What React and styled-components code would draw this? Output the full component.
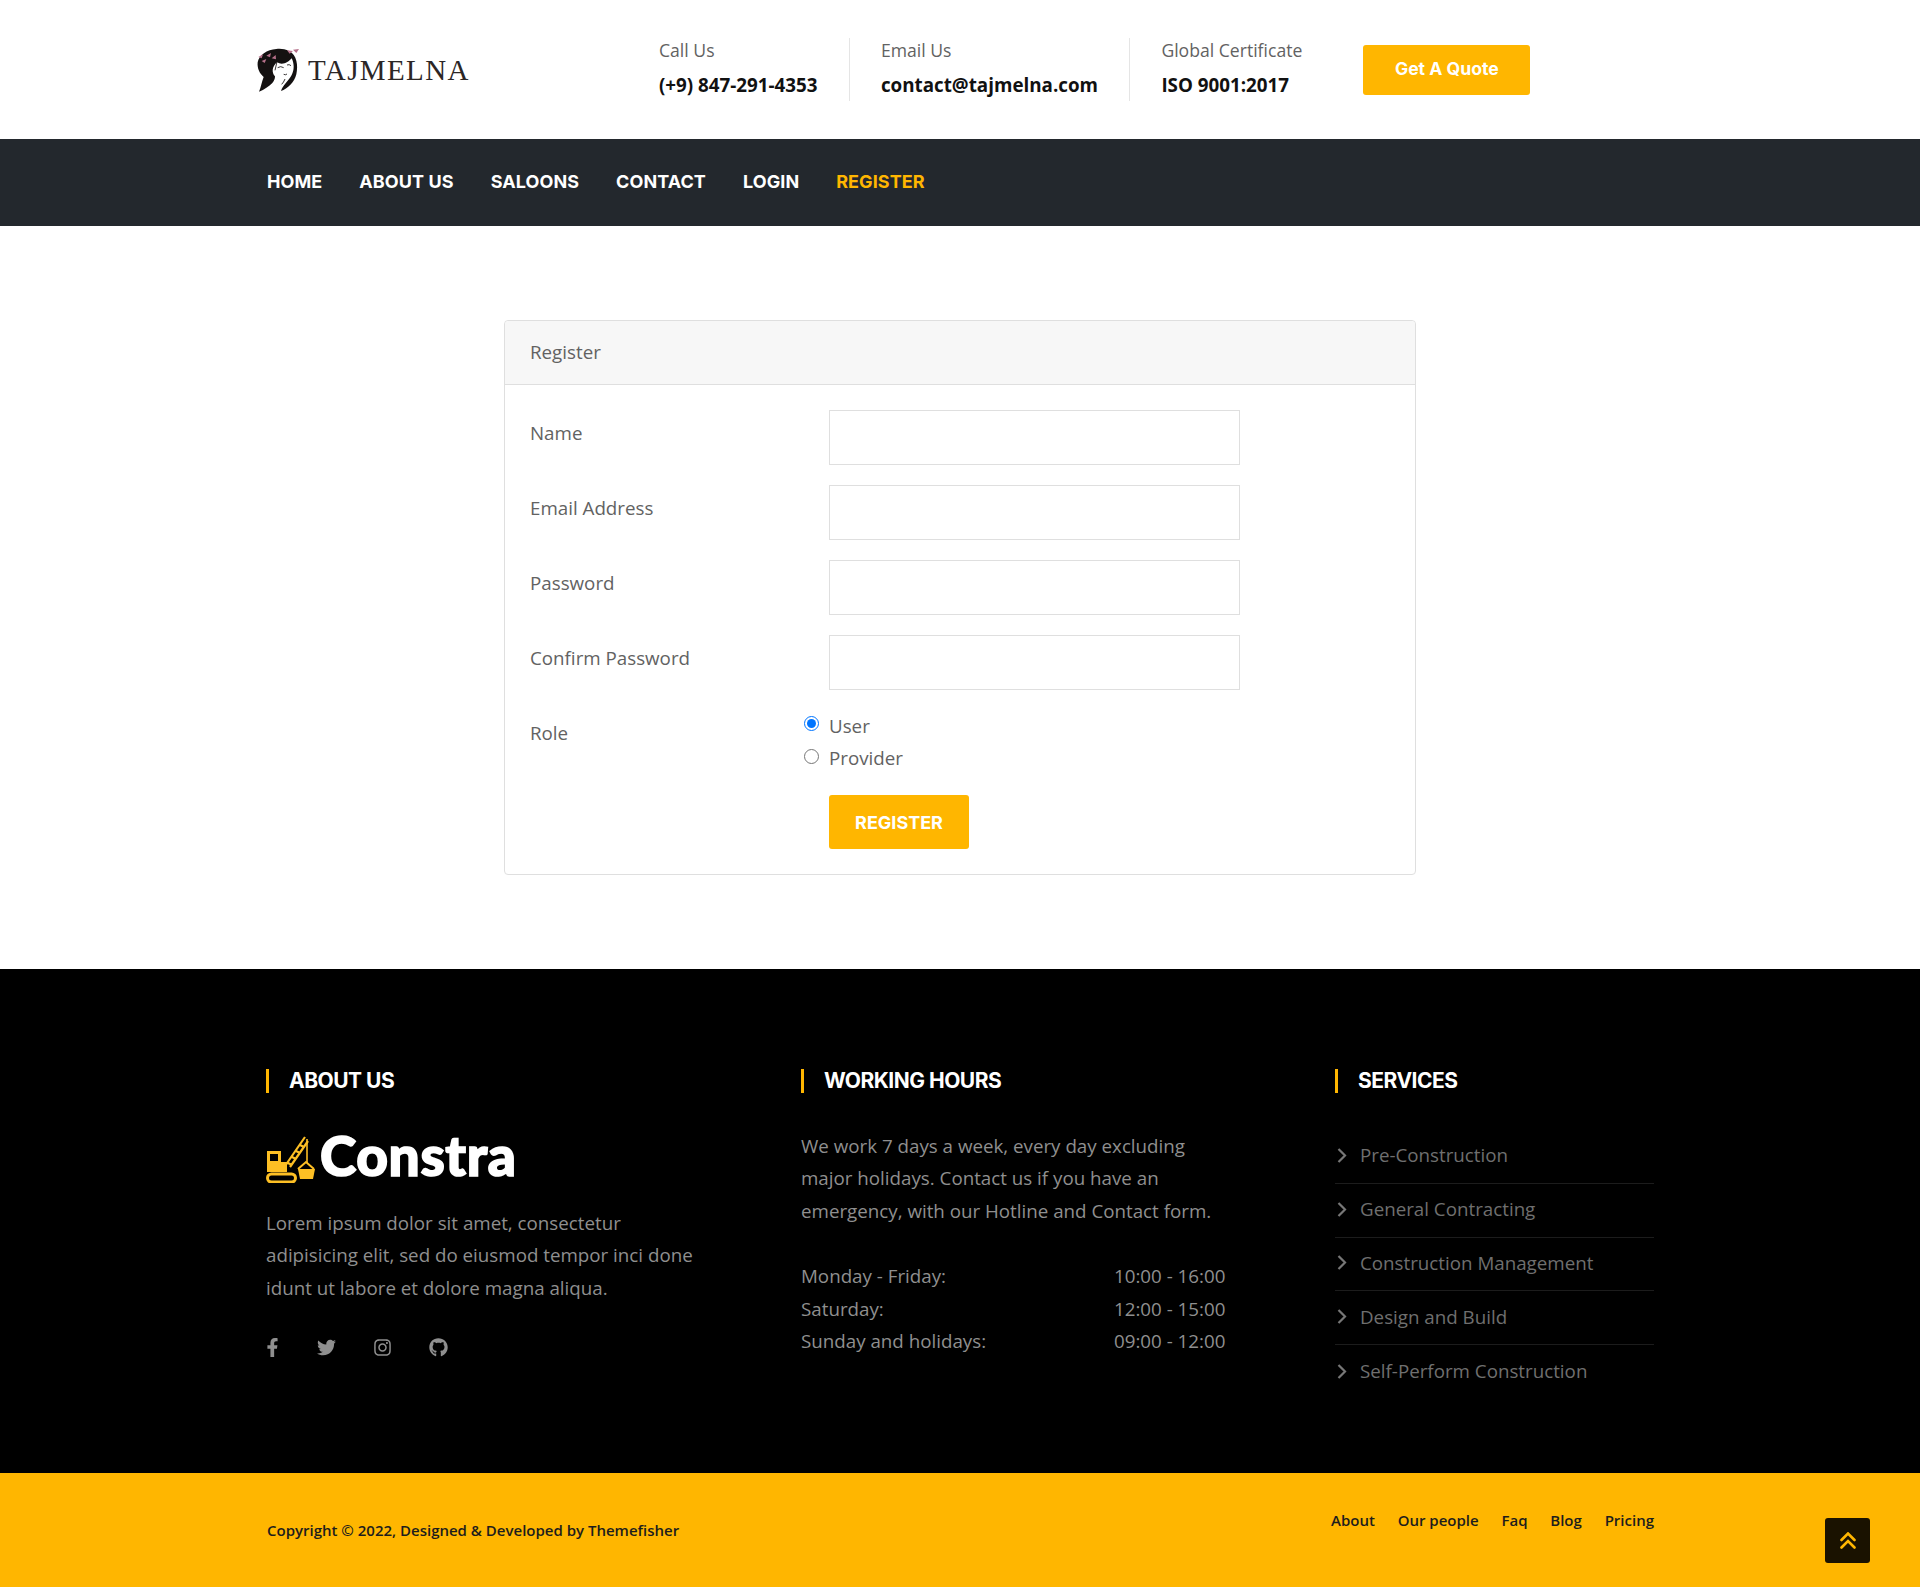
import styled, { createGlobalStyle } from "styled-components";
import { FaFacebookF, FaTwitter, FaInstagram, FaGithub } from "react-icons/fa";

const yellow = "#ffb600";
const heading = `"Inter", "Liberation Sans", sans-serif`;

const Global = createGlobalStyle`
  * { box-sizing: border-box; }
  body {
    margin: 0;
    background: #fff;
    font-family: "Open Sans", "Liberation Sans", sans-serif;
    font-size: 18.75px;
    color: #626262;
  }
`;

const Page = styled.div`
  position: relative;
  width: 1920px;
  height: 1587px;
  overflow: hidden;
`;

/* ====== Top header ====== */
const TopBar = styled.header`
  height: 139px;
  display: flex;
  align-items: center;
  padding-left: 257px;
`;

const Brand = styled.div`
  width: 402px;
  display: flex;
  align-items: center;
  gap: 9px;
`;

const BrandName = styled.span`
  font-family: "Liberation Serif", serif;
  font-size: 29px;
  letter-spacing: 1.4px;
  padding-top: 2px;
  color: #2b2626;
`;

const InfoGroup = styled.div`
  display: flex;
`;

const InfoItem = styled.div`
  height: 63px;
  padding: 0 31.2px;
  border-right: 1px solid #e5e5e5;
  &:first-child {
    padding-left: 0;
  }
  &:last-child {
    border-right: 0;
    padding-right: 0;
  }
`;

const InfoLabel = styled.div`
  font-size: 17.6px;
  line-height: 24px;
  color: #626262;
  margin-bottom: 10px;
`;

const InfoValue = styled.div`
  font-size: 18.8px;
  font-weight: 700;
  line-height: 26px;
  color: #111;
  white-space: nowrap;
`;

const QuoteButton = styled.button`
  width: 167px;
  height: 50px;
  margin-left: 61px;
  padding-bottom: 3px;
  border: 0;
  border-radius: 3px;
  background: ${yellow};
  color: #fff;
  font-family: ${heading};
  font-size: 17.6px;
  font-weight: 700;
`;

/* ====== Main nav ====== */
const Nav = styled.nav`
  height: 87px;
  background: #23282d;
  display: flex;
  align-items: center;
  gap: 37px;
  padding: 0 0 2px 267px;
`;

const NavLink = styled.a`
  font-family: ${heading};
  font-size: 18px;
  font-weight: 700;
  letter-spacing: 0.08px;
  text-transform: uppercase;
  color: ${({ $active }) => ($active ? yellow : "#fff")};
`;

/* ====== Register form ====== */
const Main = styled.main`
  height: 743px;
  padding: 94px 0 0 504px;
`;

const Card = styled.section`
  width: 912px;
  height: 555px;
  border: 1px solid #dfdfdf;
  border-radius: 4px;
`;

const CardHeader = styled.div`
  height: 64px;
  padding: 0 25px 2px;
  display: flex;
  align-items: center;
  background: #f7f7f7;
  border-bottom: 1px solid #dfdfdf;
  border-radius: 4px 4px 0 0;
`;

const CardBody = styled.form`
  padding: 25px;
`;

const FormRow = styled.div`
  display: grid;
  grid-template-columns: 299px 411px;
  margin-bottom: 20px;
`;

const Label = styled.label`
  line-height: 26px;
  padding-top: 10px;
`;

const Input = styled.input`
  height: 55px;
  width: 100%;
  border: 1px solid #dfdfdf;
  background: #fff;
`;

const RoleGroup = styled.div`
  margin-left: -25px;
`;

const RadioRow = styled.label`
  display: flex;
  align-items: center;
  height: 32.5px;
  padding-bottom: 2px;
`;

const Radio = styled.input`
  width: 15px;
  height: 15px;
  margin: 0 10px 3px 0;
`;

const RegisterButton = styled.button`
  display: block;
  width: 140px;
  height: 54px;
  margin-left: 299px;
  padding-top: 2px;
  border: 0;
  border-radius: 3px;
  background: ${yellow};
  color: #fff;
  font-family: ${heading};
  font-size: 18px;
  font-weight: 700;
`;

/* ====== Footer ====== */
const Footer = styled.footer`
  height: 504px;
  background: #000;
  padding: 100px 0 0 266px;
  display: grid;
  grid-template-columns: 535px 534px 319px;
  color: #8f8f8f;
  line-height: 32.4px;
`;

const WidgetTitle = styled.h3`
  margin: 0;
  height: 24px;
  padding-left: 20px;
  border-left: 3px solid ${yellow};
  font-family: ${heading};
  font-size: 21px;
  font-weight: 700;
  line-height: 24px;
  letter-spacing: -0.5px;
  text-transform: uppercase;
  color: #fff;
`;

const FooterLogo = styled.div`
  display: flex;
  align-items: flex-end;
  gap: 5px;
  height: 60px;
  margin-top: 30px;
`;

const LogoWord = styled.span`
  font-family: "Lato", sans-serif;
  font-size: 55px;
  font-weight: 900;
  line-height: 56px;
  letter-spacing: 0.6px;
  -webkit-text-stroke: 1.6px #fff;
  color: #fff;
`;

const AboutText = styled.p`
  width: 440px;
  margin: 24px 0 0;
`;

const Socials = styled.div`
  display: flex;
  align-items: center;
  margin-top: 34px;
  font-size: 19px;
  color: #8f8f8f;
  svg {
    display: block;
  }
`;

const SocialLink = styled.a`
  display: block;
  width: ${({ $w }) => $w}px;
  margin-left: ${({ $ml }) => $ml || 0}px;
`;

const HoursText = styled.p`
  width: 430px;
  margin: 37px 0 0;
`;

const HoursTable = styled.div`
  margin-top: 33px;
  width: 440px;
  display: grid;
  grid-template-columns: 313px 1fr;
`;

const ServiceList = styled.ul`
  list-style: none;
  margin: 37px 0 0;
  padding: 0;
`;

const ServiceItem = styled.li`
  height: 53.8px;
  display: flex;
  align-items: center;
  gap: 13px;
  padding: 0 0 2px 2px;
  color: #6f6f6f;
  border-bottom: 1px solid #1c1c1c;
  &:last-child {
    border-bottom: 0;
  }
`;

const CopyBar = styled.div`
  height: 114px;
  background: ${yellow};
  padding: 0 266px 0 267px;
  display: flex;
  justify-content: space-between;
  font-size: 15px;
  font-weight: 600;
  color: #1d1d1d;
`;

const CopyText = styled.div`
  padding-top: 47px;
`;

const CopyLinks = styled.div`
  display: flex;
  gap: 22.8px;
  padding-top: 37px;
`;

const BackToTop = styled.a`
  position: absolute;
  left: 1825px;
  top: 1518px;
  width: 45px;
  height: 45px;
  border-radius: 3px;
  background: #1a1200;
  display: flex;
  align-items: center;
  justify-content: center;
`;

function FaceLogo() {
  return (
    <svg width="42" height="44" viewBox="0 0 126 130">
      <path
        d="M58 2 C30 4 6 20 2 42 C0 60 8 76 20 86 C14 100 12 118 6 130 C22 124 36 114 46 104 C52 96 54 92 54 84 C44 74 44 56 60 42 C76 52 94 42 104 30 C112 46 112 66 104 80 C96 96 76 112 72 128 C92 122 112 102 118 78 C124 52 120 20 96 8 C84 2 70 0 58 2 Z"
        fill="#141111"
      />
      <path d="M62 58 q9 -6 18 0 M90 50 q7 -3 12 2 M80 78 q6 3 10 -1 M60 40 l-6 26 M84 92 q-4 10 -10 16" stroke="#141111" strokeWidth="2.5" fill="none" />
      <path
        d="M4 26 l14 -8 l-4 12 Z M14 38 l14 -6 l-5 12 Z M28 22 l14 -8 l-3 13 Z M44 30 l12 -10 l1 13 Z M90 6 l18 2 l-10 8 Z M108 4 l18 -2 l-8 12 Z"
        fill="#b5708a"
      />
    </svg>
  );
}

function CraneLogo() {
  return (
    <svg width="49" height="47" viewBox="0 0 49 47" fill="#fdbf24">
      <path fillRule="evenodd" d="M1 15 H15 V26 H21 V36 H1 Z M4 18 V25 H12 V18 Z" />
      <path d="M19 30 L39 1 M24 31 L42 5 M22 27 L26 29 M26 21 L30 23 M30 15 L34 17 M34 9 L38 11" stroke="#fdbf24" strokeWidth="2.2" fill="none" />
      <path d="M41 3 L41 27" stroke="#fdbf24" strokeWidth="1.6" />
      <path d="M32 33 L40 26 L48 33" stroke="#fdbf24" strokeWidth="2" fill="none" />
      <path d="M32 33 H49 L47 43 H34 Z" />
      <rect x="1.5" y="38" width="28" height="8" rx="4" fill="none" stroke="#fdbf24" strokeWidth="3" />
    </svg>
  );
}

function ChevronIcon() {
  return (
    <svg width="10" height="15" viewBox="0 0 10 15">
      <polyline points="1.5,1 8,7.5 1.5,14" fill="none" stroke="#777" strokeWidth="2.2" />
    </svg>
  );
}

function DoubleUpIcon() {
  return (
    <svg width="16" height="17" viewBox="0 0 16 17">
      <path
        d="M1.5 8 L8 1.5 L14.5 8 M1.5 15.5 L8 9 L14.5 15.5"
        fill="none"
        stroke={yellow}
        strokeWidth="2.6"
        strokeLinecap="round"
      />
    </svg>
  );
}

export default function App() {
  const nav = ["Home", "About us", "Saloons", "Contact", "Login", "Register"];
  const services = [
    "Pre-Construction",
    "General Contracting",
    "Construction Management",
    "Design and Build",
    "Self-Perform Construction",
  ];
  const fields = ["Name", "Email Address", "Password", "Confirm Password"];

  return (
    <Page>
      <Global />
      <TopBar>
        <Brand>
          <FaceLogo />
          <BrandName>TAJMELNA</BrandName>
        </Brand>
        <InfoGroup>
          <InfoItem>
            <InfoLabel>Call Us</InfoLabel>
            <InfoValue>(+9) 847-291-4353</InfoValue>
          </InfoItem>
          <InfoItem>
            <InfoLabel>Email Us</InfoLabel>
            <InfoValue>contact@tajmelna.com</InfoValue>
          </InfoItem>
          <InfoItem>
            <InfoLabel>Global Certificate</InfoLabel>
            <InfoValue>ISO 9001:2017</InfoValue>
          </InfoItem>
        </InfoGroup>
        <QuoteButton>Get A Quote</QuoteButton>
      </TopBar>

      <Nav>
        {nav.map((item) => (
          <NavLink key={item} $active={item === "Register"}>
            {item}
          </NavLink>
        ))}
      </Nav>

      <Main>
        <Card>
          <CardHeader>Register</CardHeader>
          <CardBody>
            {fields.map((f) => (
              <FormRow key={f}>
                <Label>{f}</Label>
                <Input type={f.includes("Password") ? "password" : "text"} />
              </FormRow>
            ))}
            <FormRow>
              <Label>Role</Label>
              <RoleGroup>
                <RadioRow>
                  <Radio type="radio" name="role" defaultChecked />
                  User
                </RadioRow>
                <RadioRow>
                  <Radio type="radio" name="role" />
                  Provider
                </RadioRow>
              </RoleGroup>
            </FormRow>
            <RegisterButton type="button">REGISTER</RegisterButton>
          </CardBody>
        </Card>
      </Main>

      <Footer>
        <div>
          <WidgetTitle>About Us</WidgetTitle>
          <FooterLogo>
            <CraneLogo />
            <LogoWord>Constra</LogoWord>
          </FooterLogo>
          <AboutText>
            Lorem ipsum dolor sit amet, consectetur adipisicing elit, sed do
            eiusmod tempor inci done idunt ut labore et dolore magna aliqua.
          </AboutText>
          <Socials>
            <SocialLink $w={54} $ml={-3}><FaFacebookF /></SocialLink>
            <SocialLink $w={56}><FaTwitter /></SocialLink>
            <SocialLink $w={56}><FaInstagram /></SocialLink>
            <SocialLink $w={24}><FaGithub /></SocialLink>
          </Socials>
        </div>
        <div>
          <WidgetTitle>Working Hours</WidgetTitle>
          <HoursText>
            We work 7 days a week, every day excluding major holidays. Contact
            us if you have an emergency, with our Hotline and Contact form.
          </HoursText>
          <HoursTable>
            <span>Monday - Friday:</span>
            <span>10:00 - 16:00</span>
            <span>Saturday:</span>
            <span>12:00 - 15:00</span>
            <span>Sunday and holidays:</span>
            <span>09:00 - 12:00</span>
          </HoursTable>
        </div>
        <div>
          <WidgetTitle>Services</WidgetTitle>
          <ServiceList>
            {services.map((s) => (
              <ServiceItem key={s}>
                <ChevronIcon />
                {s}
              </ServiceItem>
            ))}
          </ServiceList>
        </div>
      </Footer>

      <CopyBar>
        <CopyText>Copyright © 2022, Designed &amp; Developed by Themefisher</CopyText>
        <CopyLinks>
          <span>About</span>
          <span>Our people</span>
          <span>Faq</span>
          <span>Blog</span>
          <span>Pricing</span>
        </CopyLinks>
      </CopyBar>

      <BackToTop>
        <DoubleUpIcon />
      </BackToTop>
    </Page>
  );
}
